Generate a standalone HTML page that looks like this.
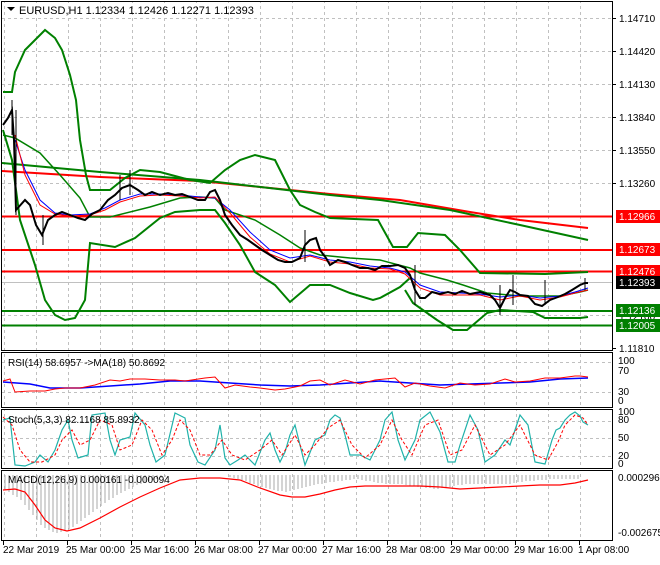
<!DOCTYPE html>
<html><head><style>
body{margin:0;background:#fff;width:660px;height:560px;overflow:hidden;font-family:"Liberation Sans",sans-serif}
svg text{font-family:"Liberation Sans",sans-serif;font-size:10px;fill:#000}
</style></head><body>
<svg width="660" height="560" xmlns="http://www.w3.org/2000/svg">
<defs>
<pattern id="gv" x="4" y="0" width="32" height="560" patternUnits="userSpaceOnUse">
<line x1="0.5" y1="0" x2="0.5" y2="560" stroke="#c0c0c0" stroke-dasharray="3,3"/>
</pattern>
</defs>
<rect x="0" y="0" width="660" height="560" fill="#fff"/>
<g>
<rect x="2" y="2" width="610" height="348" fill="url(#gv)"/>
<rect x="2" y="353" width="610" height="54" fill="url(#gv)"/>
<rect x="2" y="410" width="610" height="58" fill="url(#gv)"/>
<rect x="2" y="471" width="610" height="69" fill="url(#gv)"/>
</g>
<g stroke="#c0c0c0" stroke-dasharray="3,3">
<line x1="2" y1="18.5" x2="612" y2="18.5"/><line x1="2" y1="51.5" x2="612" y2="51.5"/>
<line x1="2" y1="84.5" x2="612" y2="84.5"/><line x1="2" y1="117.5" x2="612" y2="117.5"/>
<line x1="2" y1="150.5" x2="612" y2="150.5"/><line x1="2" y1="183.5" x2="612" y2="183.5"/>
<line x1="2" y1="216.5" x2="612" y2="216.5"/><line x1="2" y1="249.5" x2="612" y2="249.5"/>
<line x1="2" y1="282.5" x2="612" y2="282.5"/><line x1="2" y1="315.5" x2="612" y2="315.5"/>
<line x1="2" y1="362.5" x2="612" y2="362.5"/><line x1="2" y1="392.5" x2="612" y2="392.5"/>
<line x1="2" y1="421.5" x2="612" y2="421.5"/><line x1="2" y1="438.5" x2="612" y2="438.5"/><line x1="2" y1="456.5" x2="612" y2="456.5"/>
</g>
<g fill="none" stroke="#000">
<rect x="1.5" y="1.5" width="611" height="349"/>
<rect x="1.5" y="352.5" width="611" height="55"/>
<rect x="1.5" y="409.5" width="611" height="59"/>
<rect x="1.5" y="470.5" width="611" height="70"/>
</g>
<line x1="2" y1="216.5" x2="612" y2="216.5" stroke="#f00" stroke-width="2"/>
<line x1="2" y1="250" x2="612" y2="250" stroke="#f00" stroke-width="2"/>
<line x1="2" y1="271.5" x2="612" y2="271.5" stroke="#f00" stroke-width="2"/>
<line x1="2" y1="282.5" x2="612" y2="282.5" stroke="#c0c0c0"/>
<line x1="2" y1="311" x2="612" y2="311" stroke="#008000" stroke-width="2"/>
<line x1="2" y1="325.5" x2="612" y2="325.5" stroke="#008000" stroke-width="2"/>
<!-- long MAs -->
<polyline fill="none" stroke="#f00" stroke-width="2" points="2,171 100,177 200,181 330,194 400,200 470,212 520,220 588,228"/>
<polyline fill="none" stroke="#008000" stroke-width="2" points="2,163 100,172 200,180 330,195 380,200 450,210 520,225 588,240"/>
<!-- bollinger upper -->
<polyline fill="none" stroke="#008000" stroke-width="2" points="3,92 12,92 15,72 25,50 35,40 45,30 55,38 62,50 70,75 76,100 80,140 86,175 90,190 110,190 125,178 140,170 160,172 175,176 190,180 210,183 225,170 240,160 255,155 275,160 290,190 300,205 315,212 330,218 378,220 393,247 407,247 418,233 445,235 460,250 480,273 545,274 588,272"/>
<!-- bollinger lower -->
<polyline fill="none" stroke="#008000" stroke-width="2" points="3,130 12,160 20,220 35,265 45,300 55,315 65,320 75,318 85,300 90,243 115,247 135,238 160,218 175,212 200,210 215,210 225,223 240,245 255,272 275,285 290,302 310,285 330,285 350,293 373,300 380,298 400,287 410,278"/>
<polyline fill="none" stroke="#008000" stroke-width="2" points="405,290 413,303 437,320 453,330 467,330 487,313 500,310 533,312 545,318 580,318 588,317"/>
<!-- middle band -->
<polyline fill="none" stroke="#008000" stroke-width="1.5" points="3,135 15,138 40,153 60,175 80,198 90,217 110,217 150,207 180,198 200,197 215,198 225,210 255,220 280,235 300,248 320,255 350,258 380,260 410,268 420,273 447,280 463,285 487,293 520,296 560,296 580,292 588,290"/>
<!-- short MAs -->
<polyline fill="none" stroke="#00f" stroke-width="1" points="15,140 25,170 40,200 55,213 70,215 90,214 105,208 120,200 140,194 160,194 180,195 200,197 215,198 230,210 250,232 270,250 290,258 310,255 330,260 350,262 370,266 390,268 405,272 420,285 440,292 460,293 480,294 500,297 520,295 540,298 560,296 575,292 588,288"/>
<polyline fill="none" stroke="#f00" stroke-width="1" points="15,135 25,175 40,205 55,214 70,216 90,215 105,210 120,202 140,196 160,195 180,196 200,198 215,197 230,213 250,237 270,254 290,262 310,256 330,262 350,264 370,268 390,269 405,274 420,288 440,295 460,295 480,295 500,300 520,296 540,300 560,297 575,293 588,290"/>
<!-- price (candle-ish) -->
<polyline fill="none" stroke="#000" stroke-width="2" points="3,125 8,118 12,110 14,140 16,210 25,200 30,205 36,225 42,235 48,220 55,215 62,212 70,215 78,218 85,220 92,214 100,210 108,200 115,195 122,188 130,185 138,190 145,195 152,192 160,195 168,193 175,195 182,194 190,197 198,200 205,200 210,192 215,190 220,200 225,215 232,225 240,235 248,240 255,245 262,250 270,255 278,260 285,262 292,262 300,258 305,245 310,240 316,238 320,250 326,258 330,265 338,260 345,262 352,265 360,268 368,268 375,270 382,266 390,266 398,265 405,268 410,275 415,290 420,298 425,298 432,292 440,294 448,292 455,294 462,291 470,294 480,292 490,295 495,300 500,308 505,298 510,290 515,292 520,295 528,296 535,304 542,306 550,300 558,297 565,294 572,290 580,285 585,283 588,283"/>
<g stroke="#000" stroke-width="1"><path d="M12,100V135M16,110V215M43,215V245M120,175V200M130,170V195M305,230V262M415,265V305M500,285V315M513,275V305M545,280V305M585,278V290"/></g>
<!-- RSI -->
<polyline fill="none" stroke="#00f" stroke-width="1.5" points="3,382 30,384 50,388 80,388 110,386 140,384 170,381 200,381 230,383 260,385 290,386 320,385 350,383 380,381 410,383 440,385 470,384 500,383 530,382 560,379 588,378"/>
<polyline fill="none" stroke="#f00" stroke-width="1" points="3,381 10,379 15,392 30,391 45,391 55,389 65,388 80,388 95,385 110,380 120,381 130,379 145,379 160,380 175,380 185,381 205,378 215,377 225,388 235,385 250,387 260,388 275,390 285,389 300,386 310,381 320,380 330,385 345,380 360,384 375,380 395,378 405,387 415,383 430,386 445,388 460,383 475,385 490,384 505,379 515,382 530,381 545,378 560,378 575,376 580,376 588,377"/>
<!-- Stoch -->
<polyline fill="none" stroke="#20b2aa" stroke-width="1.2" points="3,420 10,418 15,465 25,466 35,462 40,455 48,462 55,450 62,430 68,420 72,440 78,458 88,455 92,415 105,413 110,440 115,455 120,440 130,437 135,413 145,425 150,445 156,462 165,455 175,413 185,418 190,445 198,462 205,465 215,450 220,425 225,458 230,465 238,460 245,455 255,465 265,440 270,433 275,450 280,462 285,452 290,435 295,425 300,445 305,465 315,440 325,435 330,420 335,415 340,418 345,435 350,455 360,455 370,460 380,440 385,420 392,412 398,440 405,460 415,440 420,420 430,412 440,432 448,462 455,462 460,445 470,415 478,430 485,462 495,455 505,440 510,445 520,415 528,425 535,462 545,464 552,440 556,430 560,428 565,420 570,415 575,412 580,416 583,422 588,425"/>
<polyline fill="none" stroke="#f00" stroke-width="1" stroke-dasharray="3,2" points="3,417 12,425 20,450 30,462 42,462 55,455 62,440 72,430 80,445 90,440 100,420 112,425 120,450 132,445 142,420 152,430 162,455 172,440 180,420 190,430 200,455 210,455 222,440 232,455 245,460 260,450 272,440 282,455 295,435 305,455 315,445 328,428 340,420 352,445 365,458 380,445 392,420 402,440 412,455 425,425 438,420 450,455 462,450 475,425 490,455 505,445 520,425 535,455 548,460 558,442 565,425 575,415 583,418 588,425"/>
<!-- MACD hist -->
<g stroke="#a8a8a8">
<path d="M5,475V490M9,475V492M13,475V495M17,475V497M21,475V500M25,475V505M29,475V510M33,475V515M37,475V520M41,475V525M45,475V528M49,475V530M53,475V532M57,475V533M61,475V532M65,475V531M69,475V529M73,475V527M77,475V524M81,475V521M85,475V518M89,475V515M93,475V512M97,475V509M101,475V506M105,475V503M109,475V500M113,475V498M117,475V495M121,475V493M125,475V491M129,475V489M133,475V487M137,475V485M141,475V484M145,475V482M149,475V481M153,475V480M157,475V479M161,475V478M165,475V477M230,475V477M234,475V478M238,475V479M242,475V480M246,475V481M250,475V483M254,475V484M258,475V486M262,475V487M266,475V488M270,475V489M274,475V490M278,475V491M282,475V491M286,475V492M290,475V491M294,475V490M298,475V489M302,475V488M306,475V487M310,475V486M314,475V485M318,475V484M322,475V484M326,475V483M330,475V482M334,475V482M338,475V481M342,475V481M346,475V480M350,475V480M354,475V479M358,475V479M362,475V480M366,475V481M370,475V481M374,475V482M378,475V483M382,475V483M386,475V484M390,475V484M394,475V484M398,475V484M402,475V484M406,475V485M410,475V486M414,475V486M418,475V487M422,475V487M426,475V488M430,475V488M434,475V489M438,475V489M442,475V488M446,475V487M450,475V487M454,475V486M458,475V485M462,475V485M466,475V484M470,475V484M474,475V484M478,475V484M482,475V484M486,475V484M490,475V484M494,475V484M498,475V484M502,475V484M506,475V484M510,475V484M514,475V483M518,475V482M522,475V482M526,475V481M530,475V481M534,475V481M538,475V480M542,475V480M546,475V480M550,475V479M554,475V479M558,475V479M562,475V479M566,475V479M570,475V479M574,475V479M578,475V479"/>
</g>
<polyline fill="none" stroke="#f00" stroke-width="1.2" points="3,490 15,489 25,492 35,505 45,520 55,528 67,531 80,528 100,518 120,507 140,497 160,488 180,480 200,478 220,478 240,480 260,488 280,495 292,497 305,497 320,494 335,490 350,487 365,486 380,486 400,486 420,486 440,487 460,489 480,488 500,487 520,486 540,485 560,485 575,483 588,480"/>
<!-- header -->
<polygon points="7,7 15,7 11,11" fill="#000"/>
<text x="19" y="14" style="font-size:11px">EURUSD,H1  1.12334 1.12426 1.12271 1.12393</text>
<text x="8" y="366">RSI(14) 58.6957  -&gt;MA(18) 50.8692</text>
<text x="8" y="423">Stoch(5,3,3) 82.1168 85.8932</text>
<text x="8" y="483">MACD(12,26,9) 0.000161 -0.000094</text>
<g stroke="#000"><line x1="612" y1="18.5" x2="616" y2="18.5"/><line x1="612" y1="51.5" x2="616" y2="51.5"/><line x1="612" y1="84.5" x2="616" y2="84.5"/><line x1="612" y1="117.5" x2="616" y2="117.5"/><line x1="612" y1="150.5" x2="616" y2="150.5"/><line x1="612" y1="183.5" x2="616" y2="183.5"/><line x1="612" y1="348.5" x2="616" y2="348.5"/></g>
<text x="619" y="22">1.14710</text><text x="619" y="55">1.14420</text><text x="619" y="88">1.14130</text>
<text x="619" y="121">1.13840</text><text x="619" y="154">1.13550</text><text x="619" y="187">1.13260</text>
<text x="619" y="352">1.11810</text>
<text x="619" y="320">1.12100</text>
<rect x="616" y="210" width="44" height="13" fill="#f00"/><text x="619" y="220" style="fill:#fff">1.12966</text>
<rect x="616" y="243" width="44" height="13" fill="#f00"/><text x="619" y="253" style="fill:#fff">1.12673</text>
<rect x="616" y="265" width="44" height="13" fill="#f00"/><text x="619" y="275" style="fill:#fff">1.12476</text>
<rect x="616" y="276" width="44" height="13" fill="#000"/><text x="619" y="286" style="fill:#fff">1.12393</text>
<rect x="616" y="304" width="44" height="13" fill="#008000"/><text x="619" y="314" style="fill:#fff">1.12136</text>
<rect x="616" y="319" width="44" height="13" fill="#008000"/><text x="619" y="329" style="fill:#fff">1.12005</text>
<text x="618" y="364">100</text><text x="618" y="374">70</text><text x="618" y="395">30</text><text x="618" y="404">0</text>
<text x="618" y="415">100</text><text x="618" y="423">80</text><text x="618" y="441">50</text><text x="618" y="459">20</text><text x="618" y="467">0</text>
<text x="618" y="481">0.000296</text><text x="618" y="536">-0.002675</text>
<g stroke="#000"><line x1="3.5" y1="541" x2="3.5" y2="545"/><line x1="67.5" y1="541" x2="67.5" y2="545"/><line x1="131.5" y1="541" x2="131.5" y2="545"/><line x1="195.5" y1="541" x2="195.5" y2="545"/><line x1="259.5" y1="541" x2="259.5" y2="545"/><line x1="323.5" y1="541" x2="323.5" y2="545"/><line x1="387.5" y1="541" x2="387.5" y2="545"/><line x1="451.5" y1="541" x2="451.5" y2="545"/><line x1="515.5" y1="541" x2="515.5" y2="545"/><line x1="579.5" y1="541" x2="579.5" y2="545"/></g>
<text x="3" y="553">22 Mar 2019</text><text x="66" y="553">25 Mar 00:00</text><text x="130" y="553">25 Mar 16:00</text>
<text x="194" y="553">26 Mar 08:00</text><text x="258" y="553">27 Mar 00:00</text><text x="322" y="553">27 Mar 16:00</text>
<text x="386" y="553">28 Mar 08:00</text><text x="450" y="553">29 Mar 00:00</text><text x="514" y="553">29 Mar 16:00</text>
<text x="578" y="553">1 Apr 08:00</text>
</svg>
</body></html>
